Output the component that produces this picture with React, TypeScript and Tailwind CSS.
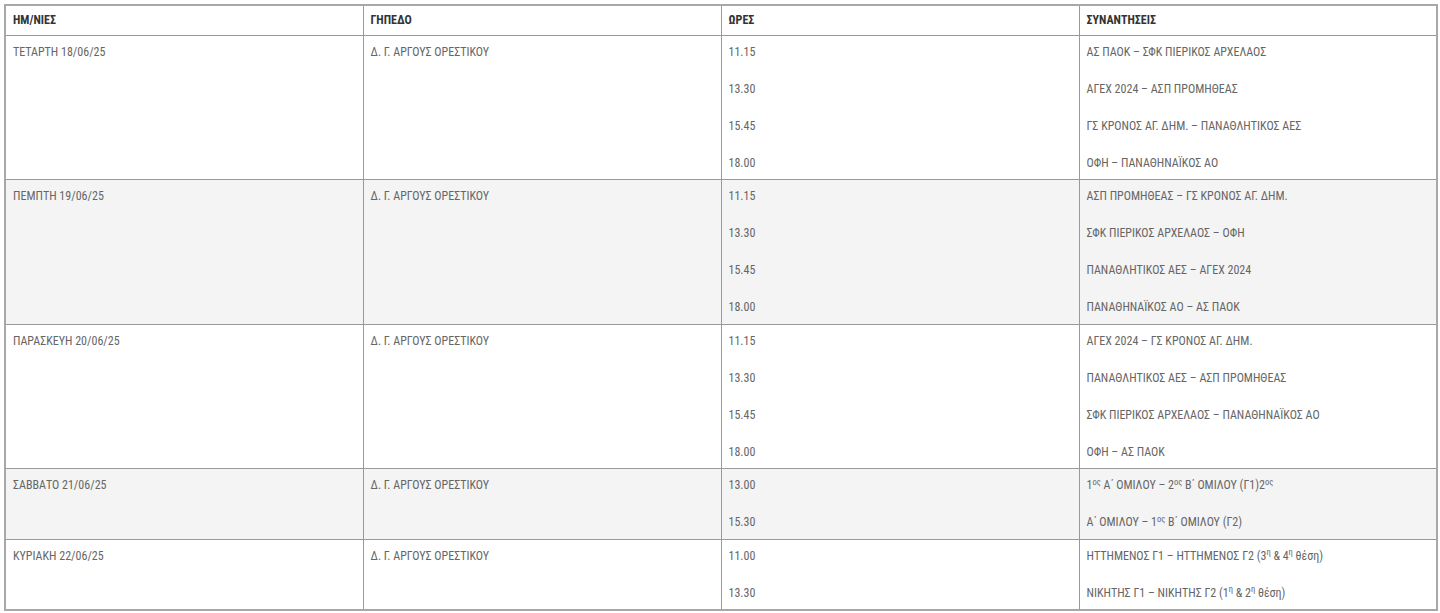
import React from "react";

type Row = { day: string; times: string[]; games: React.ReactNode[]; alt: boolean };

const Sup = ({ children }: { children: React.ReactNode }) => (
  <sup className="text-[8.5px]">{children}</sup>
);

const venue = "Δ. Γ. ΑΡΓΟΥΣ ΟΡΕΣΤΙΚΟΥ";

const rows: Row[] = [
  {
    day: "ΤΕΤΑΡΤΗ 18/06/25",
    times: ["11.15", "13.30", "15.45", "18.00"],
    games: [
      "ΑΣ ΠΑΟΚ – ΣΦΚ ΠΙΕΡΙΚΟΣ ΑΡΧΕΛΑΟΣ",
      "ΑΓΕΧ 2024 – ΑΣΠ ΠΡΟΜΗΘΕΑΣ",
      "ΓΣ ΚΡΟΝΟΣ ΑΓ. ΔΗΜ. – ΠΑΝΑΘΛΗΤΙΚΟΣ ΑΕΣ",
      "ΟΦΗ – ΠΑΝΑΘΗΝΑΪΚΟΣ ΑΟ",
    ],
    alt: false,
  },
  {
    day: "ΠΕΜΠΤΗ 19/06/25",
    times: ["11.15", "13.30", "15.45", "18.00"],
    games: [
      "ΑΣΠ ΠΡΟΜΗΘΕΑΣ – ΓΣ ΚΡΟΝΟΣ ΑΓ. ΔΗΜ.",
      "ΣΦΚ ΠΙΕΡΙΚΟΣ ΑΡΧΕΛΑΟΣ – ΟΦΗ",
      "ΠΑΝΑΘΛΗΤΙΚΟΣ ΑΕΣ – ΑΓΕΧ 2024",
      "ΠΑΝΑΘΗΝΑΪΚΟΣ ΑΟ – ΑΣ ΠΑΟΚ",
    ],
    alt: true,
  },
  {
    day: "ΠΑΡΑΣΚΕΥΗ 20/06/25",
    times: ["11.15", "13.30", "15.45", "18.00"],
    games: [
      "ΑΓΕΧ 2024 – ΓΣ ΚΡΟΝΟΣ ΑΓ. ΔΗΜ.",
      "ΠΑΝΑΘΛΗΤΙΚΟΣ ΑΕΣ – ΑΣΠ ΠΡΟΜΗΘΕΑΣ",
      "ΣΦΚ ΠΙΕΡΙΚΟΣ ΑΡΧΕΛΑΟΣ – ΠΑΝΑΘΗΝΑΪΚΟΣ ΑΟ",
      "ΟΦΗ – ΑΣ ΠΑΟΚ",
    ],
    alt: false,
  },
  {
    day: "ΣΑΒΒΑΤΟ 21/06/25",
    times: ["13.00", "15.30"],
    games: [
      <>
        1<Sup>ος</Sup> Α΄ ΟΜΙΛΟΥ – 2<Sup>ος</Sup> Β΄ ΟΜΙΛΟΥ (Γ1)2<Sup>ος</Sup>
      </>,
      <>
        Α΄ ΟΜΙΛΟΥ – 1<Sup>ος</Sup> Β΄ ΟΜΙΛΟΥ (Γ2)
      </>,
    ],
    alt: true,
  },
  {
    day: "ΚΥΡΙΑΚΗ 22/06/25",
    times: ["11.00", "13.30"],
    games: [
      <>
        ΗΤΤΗΜΕΝΟΣ Γ1 – ΗΤΤΗΜΕΝΟΣ Γ2 (3<Sup>η</Sup> &amp; 4<Sup>η</Sup> θέση)
      </>,
      <>
        ΝΙΚΗΤΗΣ Γ1 – ΝΙΚΗΤΗΣ Γ2 (1<Sup>η</Sup> &amp; 2<Sup>η</Sup> θέση)
      </>,
    ],
    alt: false,
  },
];

const Stack = ({ items }: { items: React.ReactNode[] }) => (
  <div className="flex flex-col gap-[18.5px]">
    {items.map((it, i) => (
      <div key={i}>{it}</div>
    ))}
  </div>
);

export default function App() {
  const font = {
    fontFamily:
      "'Roboto Condensed', 'Liberation Sans Narrow', 'DejaVu Sans Condensed', Roboto, sans-serif",
  };
  return (
    <div className="bg-white w-[1440px] h-[613px] p-[4px]" style={font}>
      <table className="w-[1432px] table-fixed border-collapse border-2 border-[#a8a8a8] text-[12px] leading-[18.5px] text-[#666]">
        <thead>
          <tr>
            {["ΗΜ/ΝΙΕΣ", "ΓΗΠΕΔΟ", "ΩΡΕΣ", "ΣΥΝΑΝΤΗΣΕΙΣ"].map((h) => (
              <th
                key={h}
                className="w-[358px] text-left font-bold text-[#333] px-[7px] py-[5px] border border-[#999] align-middle"
              >
                {h}
              </th>
            ))}
          </tr>
        </thead>
        <tbody>
          {rows.map((r) => (
            <tr key={r.day} className={r.alt ? "bg-[#f4f4f4]" : "bg-white"}>
              <td className="px-[7px] py-[7px] border border-[#999] align-top">{r.day}</td>
              <td className="px-[7px] py-[7px] border border-[#999] align-top">{venue}</td>
              <td className="px-[7px] py-[7px] border border-[#999] align-top">
                <Stack items={r.times} />
              </td>
              <td className="px-[7px] py-[7px] border border-[#999] align-top">
                <Stack items={r.games} />
              </td>
            </tr>
          ))}
        </tbody>
      </table>
    </div>
  );
}
